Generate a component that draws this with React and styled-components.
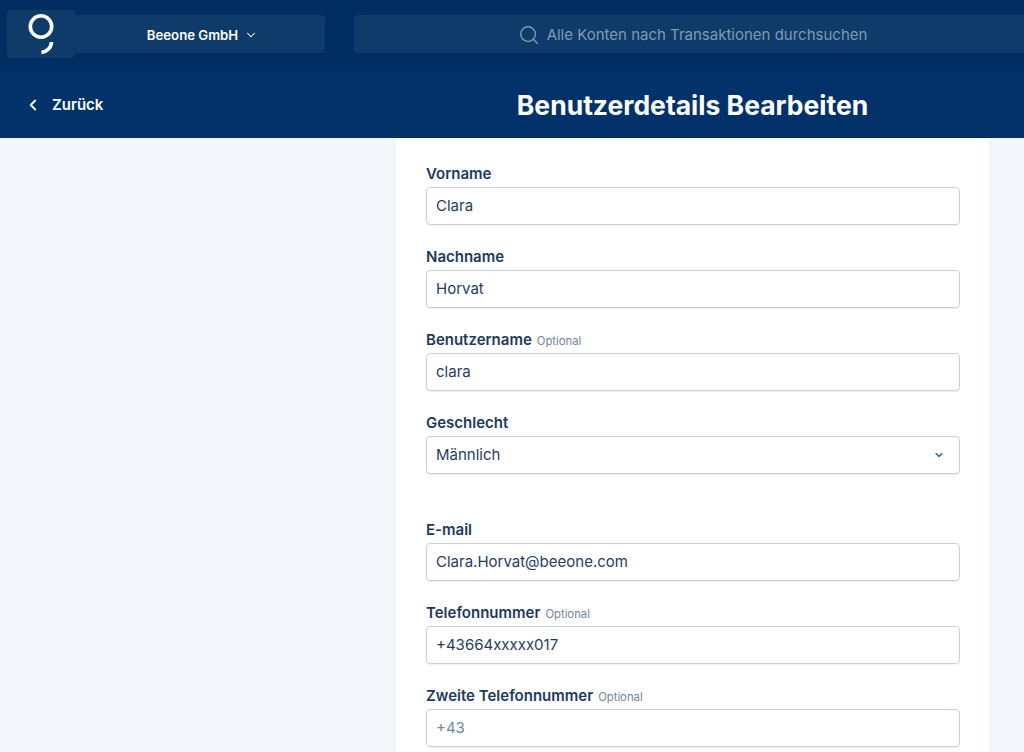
import React from "react";
import styled, { createGlobalStyle } from "styled-components";
import { ChevronDown, ChevronLeft, Search } from "lucide-react";

const Global = createGlobalStyle`
  html, body { margin: 0; padding: 0; height: 752px; overflow: hidden; background: #f3f6fa; }
  * { box-sizing: border-box; }
  body { font-family: Inter, "Liberation Sans", sans-serif; }
`;

const TopBar = styled.header`
  height: 71px;
  background: #012e62;
  display: flex;
  align-items: flex-start;
  padding: 10px 0 0 7px;
`;
const LogoTile = styled.div`
  width: 68px;
  height: 48px;
  background: #0e3b69;
  border-radius: 4px;
  display: flex;
  align-items: flex-start;
  justify-content: center;
  padding-top: 3px;
  padding-right: 1px;
`;
const Company = styled.button`
  width: 250px;
  height: 38px;
  margin-top: 5px;
  background: #0e3b69;
  border: 0;
  border-radius: 0 4px 4px 0;
  color: #fff;
  font: 600 13.2px/20px Inter, "Liberation Sans", sans-serif;
  display: flex;
  align-items: center;
  justify-content: center;
  gap: 6px;
  padding: 2px 0 0 5px;
`;
const SearchBox = styled.div`
  flex: 1;
  height: 38px;
  margin: 5px 0 0 29px;
  background: #0e3b69;
  border-radius: 4px 0 0 4px;
  color: #7f9ab5;
  font: 400 15px/20px Inter, "Liberation Sans", sans-serif;
  display: flex;
  align-items: center;
  justify-content: center;
  gap: 7px;
  padding: 2px 0 0 7px;
`;
const TitleBar = styled.div`
  height: 67px;
  background: #03326a;
  display: grid;
  grid-template-columns: 396px 593px;
  align-items: center;
  color: #fff;
`;
const Back = styled.a`
  display: flex;
  align-items: center;
  gap: 10px;
  padding-left: 24px;
  font: 600 15px/20px Inter, "Liberation Sans", sans-serif;
`;
const Title = styled.h1`
  margin: 0;
  text-align: center;
  font: 700 26.5px/32px Inter, "Liberation Sans", sans-serif;
`;
const Main = styled.main`
  display: flex;
  padding-left: 396px;
`;
const Card = styled.section`
  width: 593px;
  height: 614px;
  background: #fff;
  padding: 26px 30px 0 30px;
  overflow: hidden;
`;
const Field = styled.div`
  height: 83px;
  ${(p) => p.$spaced && "margin-bottom: 24px;"}
`;
const LabelRow = styled.div`
  height: 23px;
  display: flex;
  align-items: baseline;
  gap: 5px;
  padding-top: 1px;
`;
const Label = styled.label`
  color: #1c3a60;
  font: 600 15px/18px Inter, "Liberation Sans", sans-serif;
`;
const Hint = styled.span`
  color: #71859d;
  font: 400 11.3px/18px Inter, "Liberation Sans", sans-serif;
`;
const InputBox = styled.div`
  height: 38px;
  width: 534px;
  border: 1px solid #c9d1d8;
  border-radius: 4px;
  box-shadow: 0 1px 1px rgba(30, 50, 80, 0.08);
  padding: 0 14px 0 9px;
  display: flex;
  align-items: center;
  justify-content: space-between;
  color: ${(p) => (p.$placeholder ? "#71859d" : "#1f3d63")};
  font: 400 15px/20px Inter, "Liberation Sans", sans-serif;
`;

const LogoMark = () => (
  <svg width="26" height="44" viewBox="0 0 26 44" fill="none" stroke="#fff" strokeWidth="3.6">
    <circle cx="13" cy="13.5" r="10.7" />
    <path d="M23.5 29c0 5-4 9.5-10 10.5" />
  </svg>
);

const fields = [
  { label: "Vorname", value: "Clara" },
  { label: "Nachname", value: "Horvat" },
  { label: "Benutzername", value: "clara", optional: true },
  { label: "Geschlecht", value: "Männlich", select: true, spaced: true },
  { label: "E-mail", value: "Clara.Horvat@beeone.com" },
  { label: "Telefonnummer", value: "+43664xxxxx017", optional: true },
  { label: "Zweite Telefonnummer", value: "+43", optional: true, placeholder: true },
];

export default function App() {
  return (
    <>
      <Global />
      <TopBar>
        <LogoTile><LogoMark /></LogoTile>
        <Company>
          Beeone GmbH <ChevronDown size={14} strokeWidth={1.8} />
        </Company>
        <SearchBox>
          <Search size={22} strokeWidth={1.6} />
          Alle Konten nach Transaktionen durchsuchen
        </SearchBox>
      </TopBar>
      <TitleBar>
        <Back>
          <ChevronLeft size={18} strokeWidth={2.4} />
          Zurück
        </Back>
        <Title>Benutzerdetails Bearbeiten</Title>
      </TitleBar>
      <Main>
        <Card>
          {fields.map((f) => (
            <Field key={f.label} $spaced={f.spaced}>
              <LabelRow>
                <Label>{f.label}</Label>
                {f.optional && <Hint>Optional</Hint>}
              </LabelRow>
              <InputBox $placeholder={f.placeholder}>
                {f.value}
                {f.select && <ChevronDown size={12} color="#2f5f95" strokeWidth={2.4} />}
              </InputBox>
            </Field>
          ))}
        </Card>
      </Main>
    </>
  );
}
